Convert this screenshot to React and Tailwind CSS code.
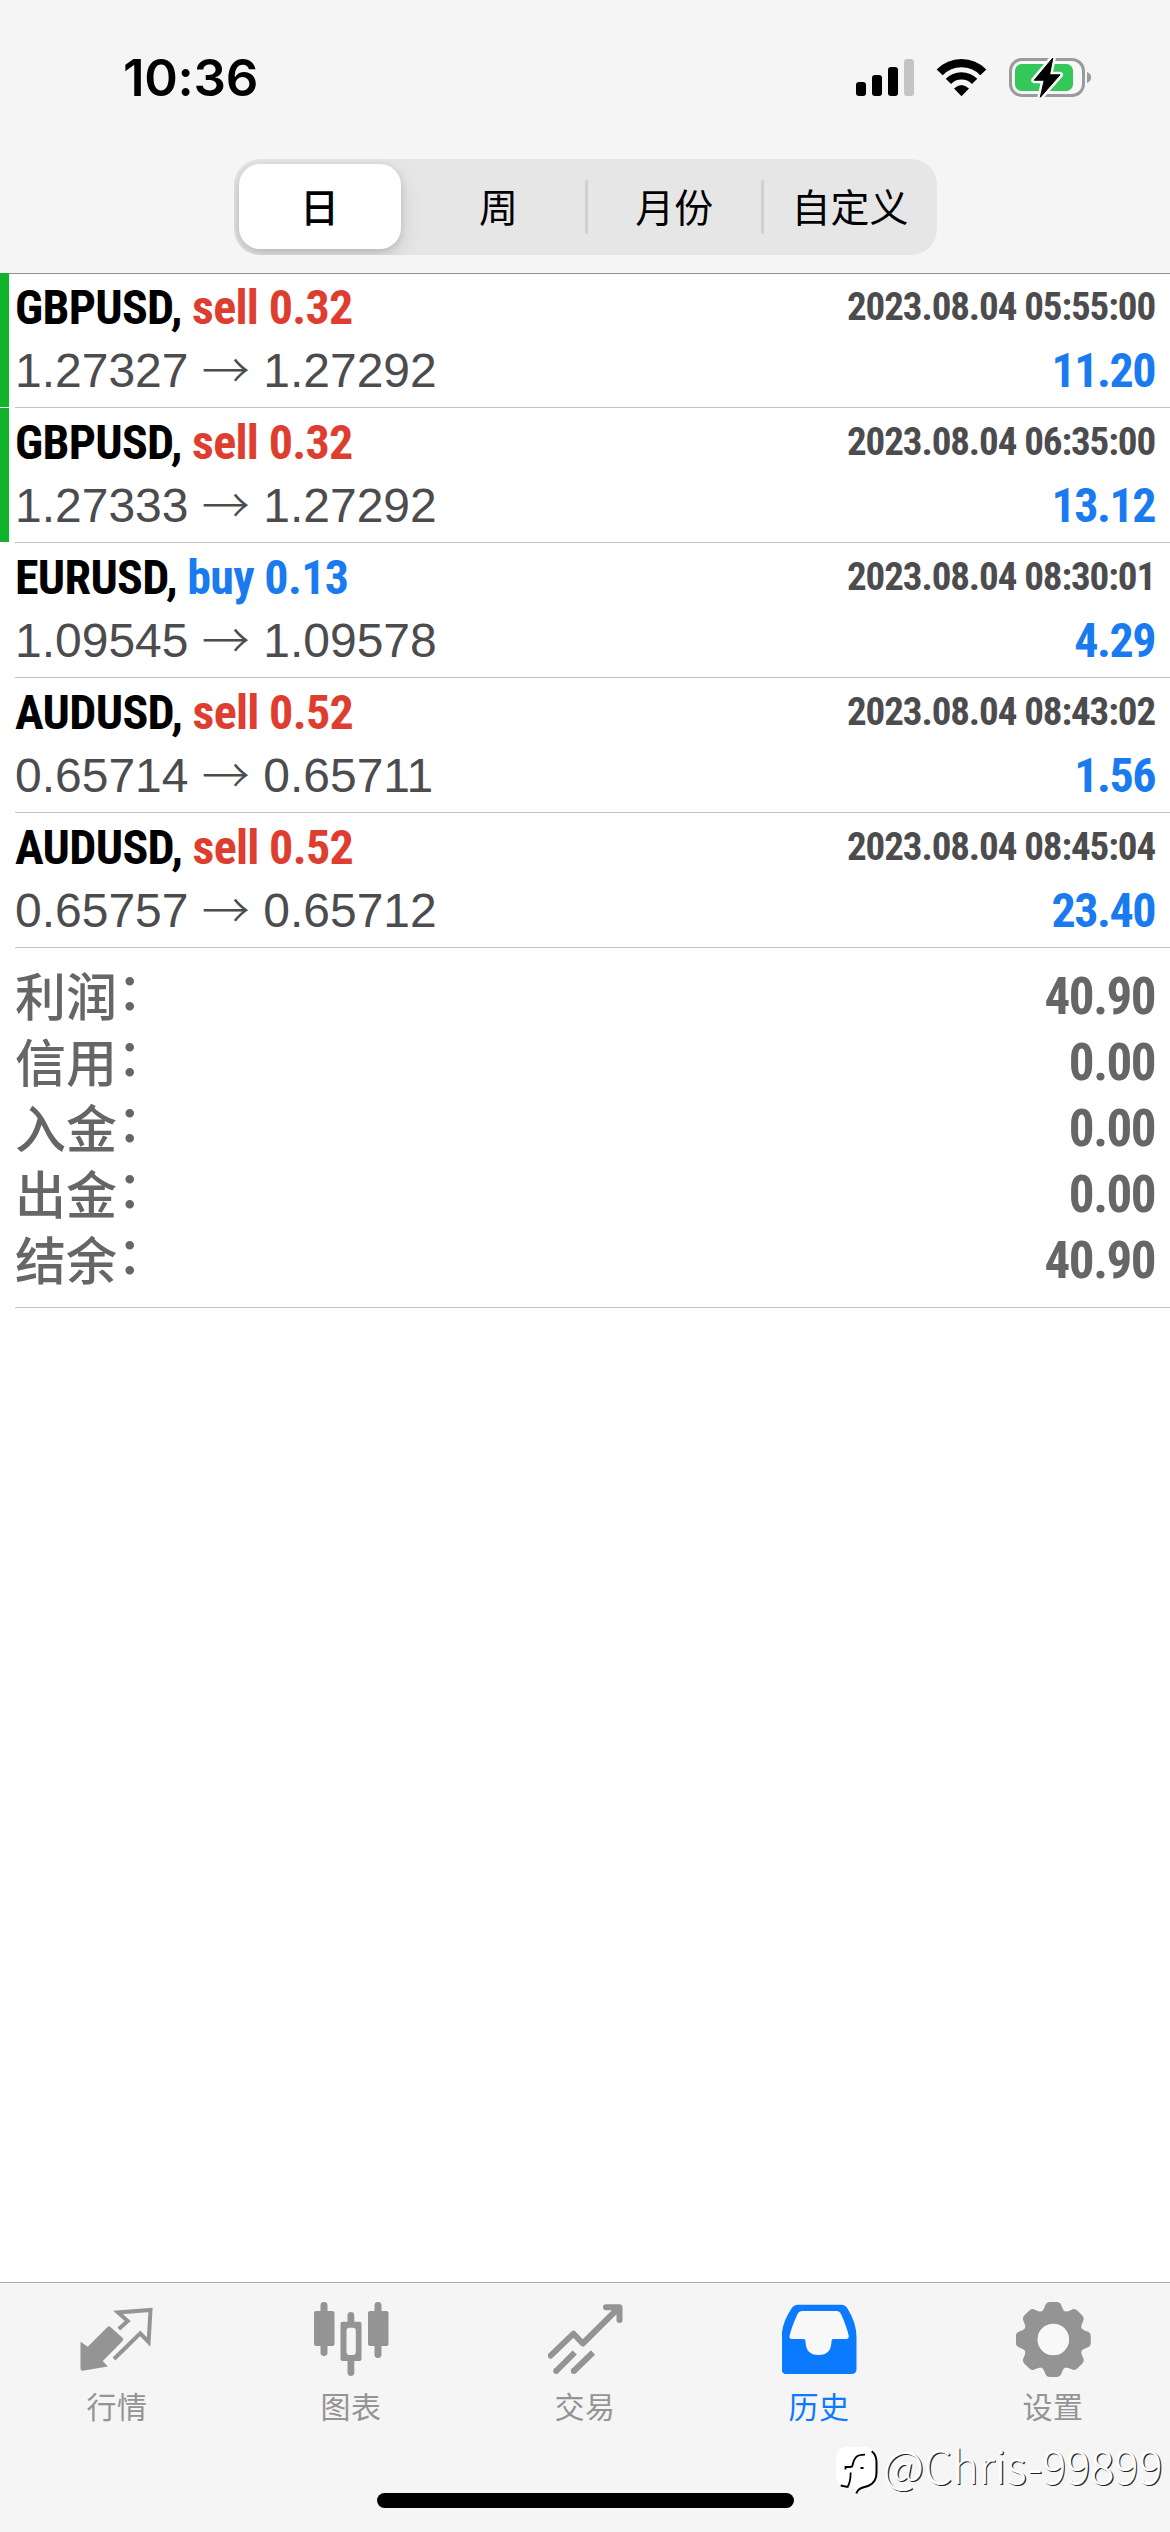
import React from 'react';

const PERIODS = ['日', '周', '月份', '自定义'];

const DEALS = [
  { symbol: 'GBPUSD', side: 'sell', volume: '0.32', open: '1.27327', close: '1.27292', time: '2023.08.04 05:55:00', profit: '11.20', marked: true },
  { symbol: 'GBPUSD', side: 'sell', volume: '0.32', open: '1.27333', close: '1.27292', time: '2023.08.04 06:35:00', profit: '13.12', marked: true },
  { symbol: 'EURUSD', side: 'buy', volume: '0.13', open: '1.09545', close: '1.09578', time: '2023.08.04 08:30:01', profit: '4.29' },
  { symbol: 'AUDUSD', side: 'sell', volume: '0.52', open: '0.65714', close: '0.65711', time: '2023.08.04 08:43:02', profit: '1.56' },
  { symbol: 'AUDUSD', side: 'sell', volume: '0.52', open: '0.65757', close: '0.65712', time: '2023.08.04 08:45:04', profit: '23.40' },
];

const SUMMARY = [
  { label: '利润', value: '40.90' },
  { label: '信用', value: '0.00' },
  { label: '入金', value: '0.00' },
  { label: '出金', value: '0.00' },
  { label: '结余', value: '40.90' },
];

const TABS = [
  { label: '行情', Icon: QuotesIcon },
  { label: '图表', Icon: ChartIcon },
  { label: '交易', Icon: TradeIcon },
  { label: '历史', Icon: HistoryIcon, active: true },
  { label: '设置', Icon: SettingsIcon },
];

export default function App() {
  return (
    <div className="relative flex h-[2532px] w-[1170px] flex-col overflow-hidden bg-white font-['Liberation_Sans','Noto_Sans_CJK_SC',sans-serif]">
      <header className="h-[274px] shrink-0 border-b border-[#8e8e90] bg-[#f5f5f5]">
        <StatusBar />
        <PeriodPicker />
      </header>

      <main className="-mt-px flex-1">
        {DEALS.map((deal) => (
          <DealRow key={deal.time} deal={deal} />
        ))}
        <Summary />
      </main>

      <TabBar />
      <Watermark />
    </div>
  );
}

function StatusBar() {
  return (
    <div className="flex h-[159px] items-start justify-between pl-[123px] pr-[78px]">
      <span className="font-['Inter',sans-serif] text-[51px] leading-[156px] font-semibold tracking-[-0.3px] text-black">10:36</span>
      <div className="flex pt-[57px]">
        <svg width="58" height="42" viewBox="0 0 58 42" className="mr-[22px]">
          <rect x="0" y="25" width="10" height="14" rx="3" />
          <rect x="16" y="18" width="10" height="21" rx="3" />
          <rect x="32" y="10" width="10" height="29" rx="3" />
          <rect x="48" y="2" width="10" height="37" rx="3" fill="#c4c4c4" />
        </svg>
        <svg width="52" height="42" viewBox="0 0 52 42" className="mr-[20px]" fill="none" stroke="#000">
          <path d="M3.7 15.4A30.3 30.3 0 0 1 47.3 15.4" strokeWidth="8.4" />
          <path d="M12.4 24.4A18.2 18.2 0 0 1 38.6 24.4" strokeWidth="7.4" />
          <path d="M18 31.5Q25.5 24.5 33 31.5L25.5 39.2Z" fill="#000" stroke="none" />
        </svg>
        <svg width="84" height="42" viewBox="0 0 84 42">
          <rect x="2.5" y="2.5" width="73" height="36" rx="11.5" fill="#f8f8f8" stroke="#9b9b9d" strokeWidth="3" />
          <rect x="7" y="7" width="58" height="27" rx="6.5" fill="#34c759" />
          <path d="M79 15C84.5 17 84.5 24 79 26Z" fill="#9b9b9d" />
          <path d="M44.8 1L26.2 23.2H36.2L32.3 40.3L52 17.8H41.6Z" stroke="#f8f8f8" strokeWidth="6" strokeLinejoin="round" />
          <path d="M44.8 1L26.2 23.2H36.2L32.3 40.3L52 17.8H41.6Z" stroke="#000" strokeWidth="1" strokeLinejoin="round" />
        </svg>
      </div>
    </div>
  );
}

function PeriodPicker() {
  return (
    <div className="mx-auto flex h-[96px] w-[703px] overflow-hidden rounded-[26px] bg-[#e6e6e7] text-[39px] text-black">
      {PERIODS.map((period, i) => (
        <div key={period} className="flex flex-1 items-start">
          {i === 0 ? (
            <div className="mt-[5px] ml-[5px] h-[85px] w-[162px] rounded-[21px] bg-white text-center font-['Noto_Sans_CJK_SC',sans-serif] leading-[82px] font-medium shadow-[0_8px_22px_rgba(0,0,0,0.13),0_2px_7px_rgba(0,0,0,0.12)]">
              {period}
            </div>
          ) : (
            <>
              {i > 1 && <div className="mt-[21px] -mr-[3px] h-[54px] w-[3px] rounded-full bg-[#d0d0d2]" />}
              <div className="flex-1 pl-[3px] text-center font-['Noto_Sans_CJK_SC',sans-serif] leading-[92px]">{period}</div>
            </>
          )}
        </div>
      ))}
    </div>
  );
}

function DealRow({ deal }) {
  return (
    <div className="flex h-[135px]">
      <div className={`mr-[6px] mb-px w-[9px] ${deal.marked ? 'bg-[#0fb42c]' : ''}`} />
      <div className="flex-1 border-b border-[#c2c2c4] pr-[15px]">
        <div className="flex items-start justify-between font-['Roboto_Condensed',sans-serif] font-bold">
          <p className="text-[48px] leading-[69px] tracking-[-0.7px] text-black">
            {deal.symbol}, <span className={deal.side === 'buy' ? 'text-[#1a7aef]' : 'text-[#dd3e30]'}>{deal.side} {deal.volume}</span>
          </p>
          <p className="text-[39px] leading-[69px] tracking-[-1.1px] text-[#4c4c4e]">{deal.time}</p>
        </div>
        <div className="flex items-start justify-between text-[48px] leading-[57px]">
          <p className="flex text-[#4c4c4e]">
            <span className="whitespace-pre">{deal.open} </span>
            <span className="w-[48px] font-['Noto_Sans_CJK_SC',sans-serif] leading-[50px] font-light">→</span>
            <span className="whitespace-pre"> {deal.close}</span>
          </p>
          <p className="font-['Roboto_Condensed',sans-serif] font-bold tracking-[-1.5px] text-[#1a7aef]">{deal.profit}</p>
        </div>
      </div>
    </div>
  );
}

function Summary() {
  return (
    <div className="ml-[15px] h-[360px] border-b border-[#c2c2c4] pt-[15px] pr-[15px] text-[51px] text-[#666666]">
      {SUMMARY.map(({ label, value }) => (
        <div key={label} className="flex h-[66px] items-start justify-between">
          <span className="font-['Noto_Sans_CJK_SC',sans-serif] leading-[60px] font-medium">
            {label}
            <span className="align-[6px] leading-none">：</span>
          </span>
          <span className="font-['Roboto_Condensed',sans-serif] leading-[68px] font-bold tracking-[-1.5px]">{value}</span>
        </div>
      ))}
    </div>
  );
}

function TabBar() {
  return (
    <nav className="h-[250px] shrink-0 border-t border-[#a9a9ab] bg-[#f5f5f5]">
      <div className="grid grid-cols-5 pt-[19px]">
        {TABS.map(({ label, Icon, active }) => (
          <div key={label} className={`flex flex-col items-center ${active ? 'text-[#0a7aff]' : 'text-[#949494]'}`}>
            <Icon />
            <span className="font-['Noto_Sans_CJK_SC',sans-serif] text-[30px] leading-[57px] tracking-[0.6px]">{label}</span>
          </div>
        ))}
      </div>
      {/* Home indicator */}
      <div className="mx-auto mt-[59px] h-[15px] w-[417px] rounded-full bg-black" />
    </nav>
  );
}

function QuotesIcon() {
  return (
    <svg width="75" height="75" viewBox="0 0 75 75" fill="none">
      <path d="M0.5 39.7L7.8 44.7L27.3 25.2Q28.8 23.5 30.5 25L42.7 36Q44 37.5 42.6 39L22.8 59L27.8 64.5L2.5 68.7Q0.5 68.7 0.5 66.5Z" fill="currentColor" />
      <path d="M38.8 27L47.7 19L38 10.5L70.5 8L68.6 40L60.2 31.3L34 57" stroke="currentColor" strokeWidth="4" />
    </svg>
  );
}

function ChartIcon() {
  return (
    <svg width="75" height="75" viewBox="0 0 75 75" fill="currentColor">
      <rect x="0" y="9" width="20.5" height="35" rx="2" />
      <rect x="6.5" y="0" width="7" height="54" rx="3.4" />
      <path fillRule="evenodd" d="M28.5 19.7H45.5A2 2 0 0 1 47.5 21.7V57A2 2 0 0 1 45.5 59H28.5A2 2 0 0 1 26.5 57V21.7A2 2 0 0 1 28.5 19.7ZM35.5 25.7A3 3 0 0 0 32.5 28.7V50A3 3 0 0 0 35.5 53H38.8A3 3 0 0 0 41.8 50V28.7A3 3 0 0 0 38.8 25.7Z" />
      <path d="M33.5 20V13.4A3.4 3.4 0 0 1 40.3 13.4V20ZM33.5 58V70.6A3.4 3.4 0 0 0 40.3 70.6V58Z" />
      <rect x="54" y="9" width="20.5" height="35" rx="2" />
      <rect x="60.5" y="0" width="7" height="56" rx="3.4" />
    </svg>
  );
}

function TradeIcon() {
  return (
    <svg width="75" height="75" viewBox="0 0 75 75" fill="none" stroke="currentColor" strokeWidth="6" strokeLinejoin="round">
      <path d="M2.7 53.7L25.5 31.7L34.8 41.5L71 5.5M58 5.2H71.5V18" strokeLinecap="round" />
      <path d="M8.2 69L26.7 50.5M25.8 69L45 50.5" />
      <path d="M8.2 69h0.01M25.8 69h0.01" strokeLinecap="round" />
    </svg>
  );
}

function HistoryIcon() {
  return (
    <svg width="75" height="75" viewBox="0 0 75 75" fill="none">
      <path d="M16 2.7H59Q63.5 2.7 65.5 6.5Q74.5 21 74.5 35V67Q74.5 72 69.5 72H4.5Q-0.3 72 -0.3 67V35Q-0.3 21 9.5 6.5Q11.5 2.7 16 2.7Z" fill="currentColor" />
      <path d="M20.5 9H54.5Q57.5 9 59 12Q64.5 24 66.8 34Q67 37 64 37H51.5Q49.5 37 49.5 39Q49.5 53 36.5 53Q23.5 53 23.5 39Q23.5 37 21.5 37H10Q7 37 7.5 34Q10 24 15.5 12Q17 9 20.5 9Z" fill="#f8f8f8" />
    </svg>
  );
}

function SettingsIcon() {
  return (
    <svg width="75" height="75" viewBox="0 0 75 75" fill="currentColor">
      {[0, 45, 90, 135, 180, 225, 270, 315].map((angle) => (
        <path key={angle} transform={`rotate(${angle} 37.3 37.5)`} d="M24 10.5Q27.5 9 29 4Q30.2 0 34 0H40.6Q44.4 0 45.6 4Q47.1 9 50.6 10.5L48 20H26Z" />
      ))}
      <circle cx="37.3" cy="37.5" r="22.5" fill="none" stroke="currentColor" strokeWidth="13.5" />
      <circle cx="37.3" cy="37.5" r="15.5" fill="#f8f8f8" />
    </svg>
  );
}

function Watermark() {
  return (
    <div className="absolute top-[2446px] left-[835px] flex items-start">
      <svg width="47" height="50" viewBox="0 0 47 50" fill="none">
        <path d="M13 1H29Q41 1 41 13V28Q41 39 31 40.5Q24 41.5 21.5 46Q21 41 13 41Q1 41 1 29V13Q1 1 13 1Z" fill="#fff" />
        <path d="M36.7 5.3Q41.5 9 41.5 16V27Q41.5 36 34 39.5C28 42 23 41.5 21.3 47.5" stroke="#000" strokeWidth="2" />
        <path d="M30 8.7C21 8.7 19 12 17.5 19.5Q17.2 21 15 21H10.5V23.5M25.5 22H28.5M15.7 26.5Q15.5 36 12.6 41L5.7 39.5" stroke="#000" strokeWidth="1.8" />
      </svg>
      <span className="ml-px font-['Noto_Sans_CJK_SC',sans-serif] text-[45px] leading-[38px] font-light text-white [text-shadow:1.2px_0.8px_0_#222]">@Chris-99899</span>
    </div>
  );
}
